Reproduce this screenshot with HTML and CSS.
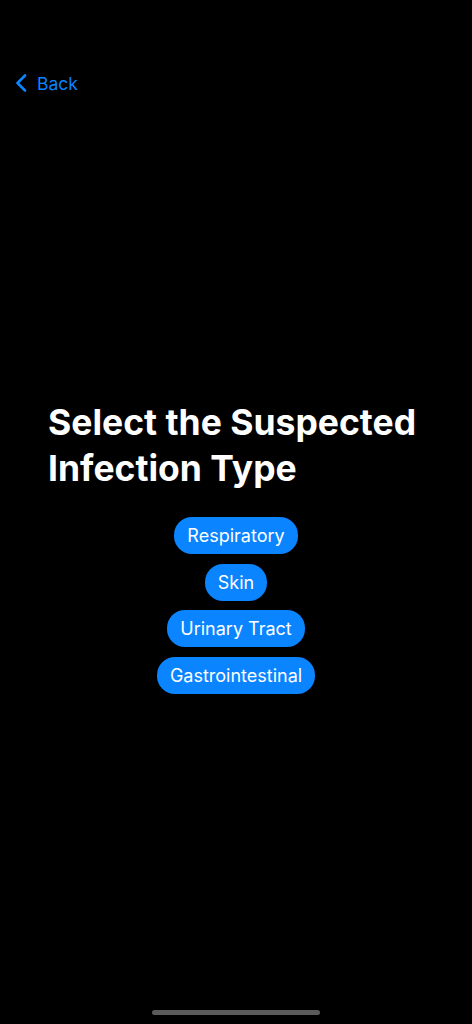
FILE: index.html
```html
<!DOCTYPE html>
<html>
<head>
<meta charset="utf-8">
<link rel="stylesheet" href="styles.css">
</head>
<body>
<div class="screen">
  <nav class="nav">
    <a class="back">
      <svg class="chev" width="12" height="18" viewBox="0 0 12 18"><path d="M10 1.5 L2.5 9 L10 16.5" fill="none" stroke="#0a84ff" stroke-width="2.6" stroke-linecap="round" stroke-linejoin="round"/></svg>
      <span>Back</span>
    </a>
  </nav>
  <main class="content">
    <h1 class="title">Select the Suspected Infection Type</h1>
    <div class="options">
      <button class="opt">Respiratory</button>
      <button class="opt">Skin</button>
      <button class="opt">Urinary Tract</button>
      <button class="opt">Gastrointestinal</button>
    </div>
  </main>
  <div class="home"></div>
</div>
</body>
</html>
```
FILE: styles.css
```css
* { box-sizing: border-box; }
html, body { margin: 0; padding: 0; background: #000; }
body { font-family: Inter, "Noto Sans", sans-serif; color: #fff; }
.screen { width: 472px; height: 1024px; display: flex; flex-direction: column; position: relative; }
.nav { height: 44px; margin-top: 61px; display: flex; align-items: center; padding-left: 15px; }
.back { display: flex; align-items: center; gap: 10px; color: #0a84ff; font-size: 17.5px; text-decoration: none; }
.chev { display: block; }
.content { display: flex; flex-direction: column; margin-top: 295px; }
.title { margin: 0; padding: 0 40px 0 48px; font-size: 35.5px; font-weight: 700; line-height: 46px; letter-spacing: 0; }
.options { display: flex; flex-direction: column; align-items: center; gap: 9.5px; margin-top: 25px; }
.opt { font-family: inherit; font-size: 18px; color: #fff; background: #0a84ff; border: none; border-radius: 18px; height: 37px; padding: 0 13px; line-height: 37px; }
.home { position: absolute; left: 152px; bottom: 9px; width: 168px; height: 5px; border-radius: 3px; background: #5b5b5b; }
```
